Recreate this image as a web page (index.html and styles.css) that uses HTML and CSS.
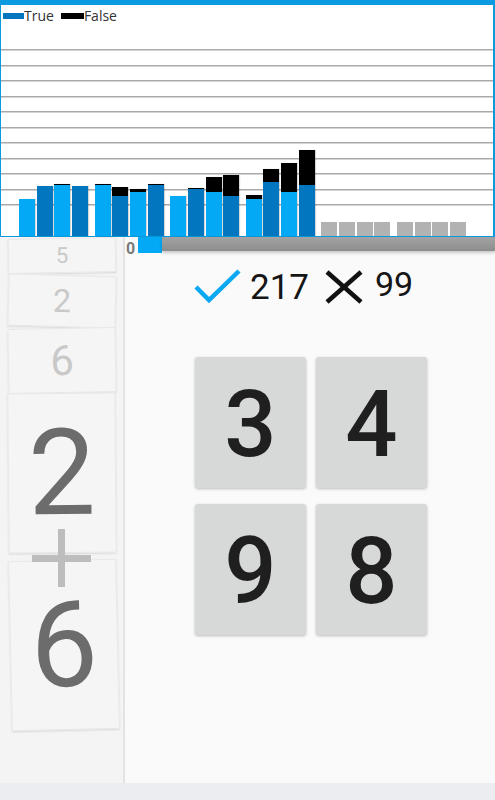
FILE: index.html
```html
<!DOCTYPE html>
<html lang="en">

<head>
    <meta charset="UTF-8">
    <meta name="viewport" content="width=device-width, initial-scale=1.0">
    <title>Math Cards</title>
    <link rel="stylesheet" href="styles.css">
</head>

<body>
<div class="chart">
    <div class="legend">
        <span class="swatch swatch-true"></span>True
        <span class="swatch swatch-false"></span>False
    </div>
    <div class="plot">
        <div class="line"></div>
        <div class="line"></div>
        <div class="line"></div>
        <div class="line"></div>
        <div class="line"></div>
        <div class="line"></div>
        <div class="line"></div>
        <div class="line"></div>
        <div class="line"></div>
        <div class="line"></div>
        <div class="line"></div>

        <div class="bars">
            <div class="group">
                <div class="bar light"><div class="ok" style="height:37px"></div></div>
                <div class="bar dark"><div class="ok" style="height:50px"></div></div>
                <div class="bar light"><div class="bad" style="height:1px"></div><div class="ok" style="height:51px"></div></div>
                <div class="bar dark"><div class="ok" style="height:50px"></div></div>
            </div>
            <div class="group">
                <div class="bar light"><div class="bad" style="height:1px"></div><div class="ok" style="height:51px"></div></div>
                <div class="bar dark"><div class="bad" style="height:9px"></div><div class="ok" style="height:40px"></div></div>
                <div class="bar light"><div class="bad" style="height:3px"></div><div class="ok" style="height:44px"></div></div>
                <div class="bar dark"><div class="bad" style="height:1px"></div><div class="ok" style="height:51px"></div></div>
            </div>
            <div class="group">
                <div class="bar light"><div class="ok" style="height:40px"></div></div>
                <div class="bar dark"><div class="bad" style="height:1px"></div><div class="ok" style="height:47px"></div></div>
                <div class="bar light"><div class="bad" style="height:15px"></div><div class="ok" style="height:44px"></div></div>
                <div class="bar dark"><div class="bad" style="height:21px"></div><div class="ok" style="height:40px"></div></div>
            </div>
            <div class="group">
                <div class="bar light"><div class="bad" style="height:4px"></div><div class="ok" style="height:37px"></div></div>
                <div class="bar dark"><div class="bad" style="height:13px"></div><div class="ok" style="height:54px"></div></div>
                <div class="bar light"><div class="bad" style="height:29px"></div><div class="ok" style="height:44px"></div></div>
                <div class="bar dark"><div class="bad" style="height:35px"></div><div class="ok" style="height:51px"></div></div>
            </div>
            <div class="group">
                <div class="bar empty"></div>
                <div class="bar empty"></div>
                <div class="bar empty"></div>
                <div class="bar empty"></div>
            </div>
            <div class="group">
                <div class="bar empty"></div>
                <div class="bar empty"></div>
                <div class="bar empty"></div>
                <div class="bar empty"></div>
            </div>
        </div>
    </div>
</div>

<div class="main">
    <div class="side">
        <div class="card card-xs">5</div>
        <div class="card card-s">2</div>
        <div class="card card-m">6</div>
        <div class="card card-big card-top">2</div>
        <div class="card card-big card-bottom">6</div>
        <div class="plus"></div>
    </div>

    <div class="panel">
        <div class="progress">
            <span class="progress-label">0</span>
            <span class="progress-done"></span>
            <span class="progress-track"></span>
        </div>

        <div class="score">
            <svg class="icon-check" width="48" height="36" viewBox="0 0 48 36">
                <polyline points="2,18 15,31 45,2" fill="none" stroke="#0aa8f2" stroke-width="4.5"/>
            </svg>
            <span class="count">217</span>
            <svg class="icon-cross" width="38" height="34" viewBox="0 0 38 34">
                <line x1="2" y1="2" x2="36" y2="32" stroke="#111" stroke-width="4.5"/>
                <line x1="36" y1="2" x2="2" y2="32" stroke="#111" stroke-width="4.5"/>
            </svg>
            <span class="count count-miss">99</span>
        </div>

        <div class="answers">
            <button class="answer">3</button>
            <button class="answer">4</button>
            <button class="answer">9</button>
            <button class="answer">8</button>
        </div>
    </div>
</div>

<div class="footer"></div>
</body>

</html>
```

FILE: styles.css
```css
body {
    margin: 0;
    width: 495px;
    height: 800px;
    overflow: hidden;
    background-color: #fafafa;
    font-family: Roboto, "Liberation Sans", sans-serif;
}

/* график */

.chart {
    box-sizing: border-box;
    display: flex;
    flex-direction: column;
    height: 237px;
    background-color: #fff;
    border-top: 5px solid #0b9ae0;
    border-left: 1px solid #0b9ae0;
    border-right: 2px solid #0b9ae0;
    border-bottom: 1px solid #0b9ae0;
}

.legend {
    display: flex;
    align-items: center;
    height: 20px;
    padding-left: 2px;
    font-family: "Open Sans", sans-serif;
    font-size: 14px;
    color: #333;
}

.swatch {
    width: 21px;
    height: 6px;
    margin-top: 1px;
}

.swatch-true {
    background-color: #0277c0;
}

.swatch-false {
    width: 23px;
    margin-left: 7px;
    background-color: #000;
}

.plot {
    position: relative;
    flex: 1;
    padding-top: 24px;
}

.line {
    height: 15.5px;
    background: linear-gradient(#a9a9a9 0 1px, #d4d4d4 1px 2px, transparent 2px);
}

.bars {
    position: absolute;
    left: 0;
    right: 0;
    bottom: 0;
    display: flex;
    align-items: flex-end;
    gap: 6.5px;
    padding-left: 18px;
}

.group {
    display: flex;
    align-items: flex-end;
    gap: 1.7px;
}

.bar {
    display: flex;
    flex-direction: column;
    width: 16px;
    box-shadow: 1px 0 1px rgba(0, 0, 0, 0.15);
}

.bad {
    background-color: #000;
}

.light .ok {
    background-color: #03a9f4;
}

.dark .ok {
    background-color: #0277bf;
}

.empty {
    height: 14px;
    background-color: #b2b2b2;
    box-shadow: none;
}

/* нижняя часть */

.main {
    display: flex;
    height: 546px;
}

.side {
    position: relative;
    width: 123px;
    padding-top: 1px;
    background-color: #f4f4f4;
    border-right: 2px solid #e3e3e3;
}

.card {
    box-sizing: border-box;
    display: flex;
    justify-content: center;
    align-items: center;
    width: 108px;
    margin-left: 8px;
    line-height: 1;
    background-color: #f5f5f5;
    border: 1px solid #e8e8e8;
    box-shadow: 0 1px 2px rgba(0, 0, 0, 0.12);
    color: #c9c9c9;
}

.card-xs {
    height: 35px;
    font-size: 22px;
    transform: rotate(-1deg);
}

.card-s {
    height: 52px;
    margin-top: 2px;
    font-size: 32px;
    transform: rotate(1.5deg);
}

.card-m {
    height: 65px;
    margin-top: 1px;
    font-size: 42px;
    transform: rotate(-1deg);
}

.card-big {
    font-size: 120px;
    color: #6c6c6c;
}

.card-top {
    height: 160px;
    transform: rotate(-0.5deg);
}

.card-bottom {
    height: 170px;
    margin-top: 7px;
    margin-left: 10px;
    transform: rotate(-1.3deg);
}

.plus {
    position: absolute;
    left: 32px;
    top: 292px;
    width: 59px;
    height: 58px;
}

.plus::before,
.plus::after {
    content: "";
    position: absolute;
    background-color: #bdbdbd;
}

.plus::before {
    left: 0;
    right: 0;
    top: 26px;
    height: 7px;
}

.plus::after {
    top: 0;
    bottom: 0;
    left: 26px;
    width: 7px;
}

.panel {
    flex: 1;
}

.progress {
    display: flex;
    height: 16px;
}

.progress-label {
    width: 12px;
    margin-top: 4px;
    padding-left: 1px;
    font-size: 16px;
    font-weight: bold;
    line-height: 16px;
    color: #7a7a7a;
}

.progress-done {
    width: 24px;
    background-color: #03a9f4;
}

.progress-track {
    flex: 1;
    height: 14px;
    background: linear-gradient(#a3a3a3, #8d8d8d);
    box-shadow: 0 2px 3px rgba(0, 0, 0, 0.2);
}

.score {
    display: flex;
    align-items: center;
    height: 36px;
    margin-top: 16px;
    padding-left: 69px;
}

.count {
    margin-left: 8px;
    font-size: 35px;
    color: #151515;
}

.icon-cross {
    margin-left: 16px;
}

.count-miss {
    margin-left: 12px;
    margin-bottom: 6px;
    font-size: 34px;
}

.answers {
    display: grid;
    grid-template-columns: 111px 111px;
    grid-auto-rows: 131px;
    column-gap: 10px;
    row-gap: 16px;
    justify-content: center;
    margin-top: 52px;
    padding-left: 2px;
}

.answer {
    padding: 0;
    padding-top: 4px;
    border: none;
    border-radius: 3px;
    background-color: #d7d8d8;
    box-shadow: 0 1px 3px rgba(0, 0, 0, 0.25);
    font-family: Roboto, sans-serif;
    font-size: 92px;
    font-weight: 500;
    line-height: 1;
    color: #1f1f1f;
}

.footer {
    height: 17px;
    background-color: #ebedf0;
}
```
